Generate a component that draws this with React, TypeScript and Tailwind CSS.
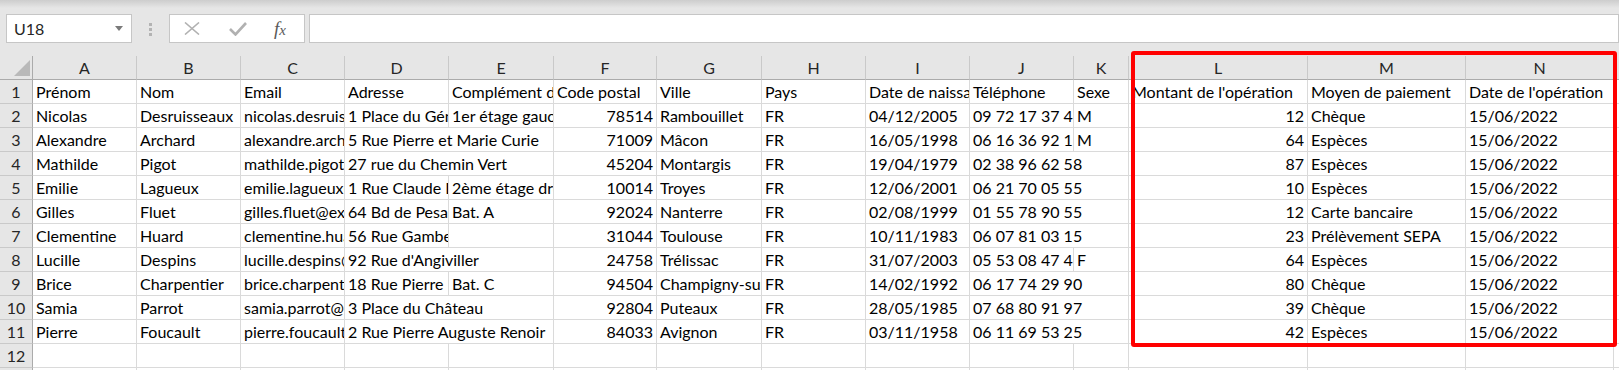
import React from "react";

const rows: string[][] = [
  ["Prénom", "Nom", "Email", "Adresse", "Complément d'adresse", "Code postal", "Ville", "Pays", "Date de naissance", "Téléphone", "Sexe", "Montant de l'opération", "Moyen de paiement", "Date de l'opération"],
  ["Nicolas", "Desruisseaux", "nicolas.desruisseaux@exemple.fr", "1 Place du Général de Gaulle", "1er étage gauche", "78514", "Rambouillet", "FR", "04/12/2005", "09 72 17 37 45", "M", "12", "Chèque", "15/06/2022"],
  ["Alexandre", "Archard", "alexandre.archard@exemple.fr", "5 Rue Pierre et Marie Curie", "", "71009", "Mâcon", "FR", "16/05/1998", "06 16 36 92 18", "M", "64", "Espèces", "15/06/2022"],
  ["Mathilde", "Pigot", "mathilde.pigot@exemple.fr", "27 rue du Chemin Vert", "", "45204", "Montargis", "FR", "19/04/1979", "02 38 96 62 58", "", "87", "Espèces", "15/06/2022"],
  ["Emilie", "Lagueux", "emilie.lagueux@exemple.fr", "1 Rue Claude Debussy", "2ème étage droite", "10014", "Troyes", "FR", "12/06/2001", "06 21 70 05 55", "", "10", "Espèces", "15/06/2022"],
  ["Gilles", "Fluet", "gilles.fluet@exemple.fr", "64 Bd de Pesaro", "Bat. A", "92024", "Nanterre", "FR", "02/08/1999", "01 55 78 90 55", "", "12", "Carte bancaire", "15/06/2022"],
  ["Clementine", "Huard", "clementine.huard@exemple.fr", "56 Rue Gambetta", "", "31044", "Toulouse", "FR", "10/11/1983", "06 07 81 03 15", "", "23", "Prélèvement SEPA", "15/06/2022"],
  ["Lucille", "Despins", "lucille.despins@exemple.fr", "92 Rue d'Angiviller", "", "24758", "Trélissac", "FR", "31/07/2003", "05 53 08 47 42", "F", "64", "Espèces", "15/06/2022"],
  ["Brice", "Charpentier", "brice.charpentier@exemple.fr", "18 Rue Pierre Brossolette", "Bat. C", "94504", "Champigny-sur-Marne", "FR", "14/02/1992", "06 17 74 29 90", "", "80", "Chèque", "15/06/2022"],
  ["Samia", "Parrot", "samia.parrot@exemple.fr", "3 Place du Château", "", "92804", "Puteaux", "FR", "28/05/1985", "07 68 80 91 97", "", "39", "Chèque", "15/06/2022"],
  ["Pierre", "Foucault", "pierre.foucault@exemple.fr", "2 Rue Pierre Auguste Renoir", "", "84033", "Avignon", "FR", "03/11/1958", "06 11 69 53 25", "", "42", "Espèces", "15/06/2022"],
  ["", "", "", "", "", "", "", "", "", "", "", "", "", ""],
  ["", "", "", "", "", "", "", "", "", "", "", "", "", ""],
];

// text that runs over the empty cell to its right (row index -> column index)
const spill: Record<number, number[]> = {
  2: [3],
  3: [3, 9],
  4: [9],
  5: [9],
  6: [9],
  7: [3],
  8: [9],
  9: [3, 9],
  10: [3, 9],
};

const letters = ["A", "B", "C", "D", "E", "F", "G", "H", "I", "J", "K", "L", "M", "N"];

const gridRow =
  "grid grid-cols-[33px_104px_104px_104px_104px_105px_103px_105px_104px_104px_104px_55px_179px_158px_148px_1fr]";

const FormulaBar = () => (
  <div className="relative h-[56px]">
    <div className="absolute inset-x-0 top-0 h-[8px] bg-linear-to-b from-[#cdcdcd] to-[#e6e6e6]" />
    <div className="relative flex items-start pt-[14px] pl-[6px] gap-0">
      <div className="flex items-center justify-between w-[126px] h-[29px] bg-white border border-[#c6c6c6] pl-[7px] pr-[8px] text-[16px] text-[#262626]">
        <span>U18</span>
        <svg width="8" height="5" viewBox="0 0 8 5">
          <path d="M0 0 L8 0 L4 5 Z" fill="#7a7a7a" />
        </svg>
      </div>
      <div className="flex flex-col gap-[2px] ml-[17px] mt-[9px]">
        <span className="w-[3px] h-[3px] bg-[#b3b3b3]" />
        <span className="w-[3px] h-[3px] bg-[#b3b3b3]" />
        <span className="w-[3px] h-[3px] bg-[#b3b3b3]" />
      </div>
      <div className="flex items-center w-[136px] h-[29px] bg-white border border-[#c6c6c6] ml-[17px]">
        <svg width="16" height="13" viewBox="0 0 16 13" className="ml-[14px]">
          <path d="M1 0.5 L15 12.5 M15 0.5 L1 12.5" stroke="#b1b1b1" strokeWidth="1.6" fill="none" />
        </svg>
        <svg width="18" height="14" viewBox="0 0 18 14" className="ml-[29px]">
          <path d="M1 7 L6.5 12.5 L17 1" stroke="#b1b1b1" strokeWidth="2.6" fill="none" />
        </svg>
        <span className="ml-[27px] font-['Liberation_Serif',serif] italic text-[19px] leading-none text-[#5a5a5a]">
          f<span className="text-[15px]">x</span>
        </span>
      </div>
      <div className="flex-1 h-[29px] bg-white border border-[#c6c6c6] ml-[4px]" />
    </div>
  </div>
);

const HeaderRow = () => (
  <div className={`${gridRow} h-[24px]`}>
    <div className="relative border-r border-b border-[#ababab] bg-[#e6e6e6]">
      <svg width="16" height="16" viewBox="0 0 16 16" className="absolute left-[14px] top-[4px]">
        <path d="M16 0 L16 16 L0 16 Z" fill="#b9b9b9" />
      </svg>
    </div>
    {letters.map((l) => (
      <div
        key={l}
        className="border-r border-b border-r-[#c9c9c9] border-b-[#ababab] bg-[#e6e6e6] text-center leading-[23px] text-[#262626]"
      >
        {l}
      </div>
    ))}
    <div className="border-b border-[#ababab] bg-[#e6e6e6]" />
  </div>
);

const DataRow = ({ cells, index }: { cells: string[]; index: number }) => {
  const over = spill[index] || [];
  const out: React.ReactNode[] = [];
  for (let c = 0; c < cells.length; c++) {
    const text = cells[c];
    const isNum = /^\d+$/.test(text);
    const merged = over.includes(c);
    out.push(
      <div
        key={c}
        className={`border-r border-b border-[#dadada] bg-white overflow-hidden whitespace-nowrap px-[3px] leading-[23px] text-black ${
          merged ? "col-span-2" : ""
        } ${isNum ? "text-right" : "text-left"}`}
      >
        {text}
      </div>
    );
    if (merged) c++;
  }
  return (
    <div className={`${gridRow} h-[24px]`}>
      <div className="border-r border-b border-r-[#ababab] border-b-[#c9c9c9] bg-[#e6e6e6] text-center leading-[23px] text-[#262626]">
        {index + 1}
      </div>
      {out}
      <div className="border-b border-[#dadada] bg-white" />
    </div>
  );
};

export default function App() {
  return (
    <div className="relative w-[1619px] h-[370px] overflow-hidden bg-[#e6e6e6] font-['Lato','Liberation_Sans',sans-serif] text-[16px]">
      <FormulaBar />
      <HeaderRow />
      {rows.map((r, i) => (
        <DataRow key={i} cells={r} index={i} />
      ))}
      <div className="absolute left-[1131px] top-[51px] w-[486px] h-[296px] border-4 border-[#ff0000] rounded-[3px] pointer-events-none" />
    </div>
  );
}
